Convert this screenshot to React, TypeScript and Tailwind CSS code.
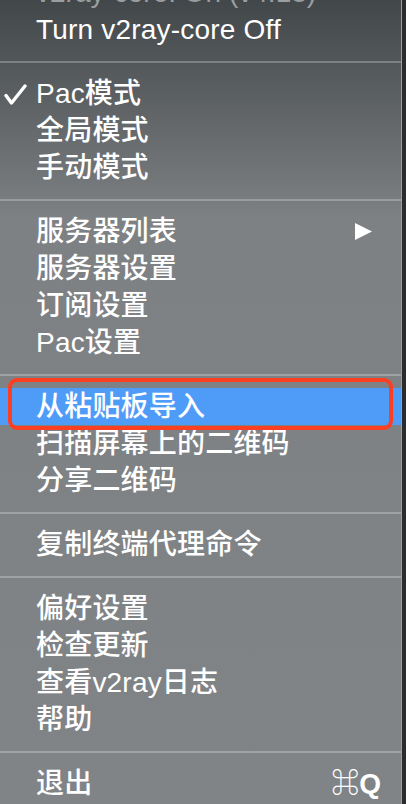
const font = { fontFamily: '"Liberation Sans", "Noto Sans CJK SC", sans-serif' };

function Row({ label, check, arrow, shortcut, active }: { label: string; check?: boolean; arrow?: boolean; shortcut?: string; active?: boolean }) {
  return (
    <div className={`relative flex items-center h-[37px] pl-[36px] pr-[24px] ${active ? "bg-[#4f9cf8]" : ""}`}>
      {check && (
        <svg className="absolute left-[4px] top-[9px]" width="24" height="22" viewBox="0 0 24 22">
          <path d="M2 11.5 L7.5 19 L21 2" fill="none" stroke="white" strokeWidth="3.4" strokeLinecap="round" strokeLinejoin="round" />
        </svg>
      )}
      <span className="text-[28px] leading-none font-medium text-white tracking-[0.2px]">{label}</span>
      {arrow && (
        <svg className="ml-auto mr-[5px]" width="17" height="17" viewBox="0 0 17 17">
          <path d="M0 0 L17 8.5 L0 17 Z" fill="white" />
        </svg>
      )}
      {shortcut && <span className="ml-auto mr-[-4px] text-[28px] leading-none font-bold text-white">{shortcut}</span>}
    </div>
  );
}

function Sep() {
  return (
    <div className="h-[27px] flex items-center">
      <div className="w-full h-[2px] bg-white/25" />
    </div>
  );
}

export default function App() {
  return (
    <div className="w-[406px] h-[804px] overflow-hidden flex bg-[#1f2122]" style={font}>
      <div className="relative w-[401px] h-full flex flex-col bg-linear-to-b from-[#42474a] via-[#7e8184] via-[27%] to-[#818487]">
        <div className="-mt-[26px] flex items-center h-[37px] pl-[36px]">
          <span className="text-[28px] leading-none text-[#9a9ea1]">v2ray-core: On  (v4.18)</span>
        </div>
        <Row label="Turn v2ray-core Off" />
        <Sep />
        <Row label="Pac模式" check />
        <Row label="全局模式" />
        <Row label="手动模式" />
        <Sep />
        <Row label="服务器列表" arrow />
        <Row label="服务器设置" />
        <Row label="订阅设置" />
        <Row label="Pac设置" />
        <Sep />
        <Row label="从粘贴板导入" active />
        <Row label="扫描屏幕上的二维码" />
        <Row label="分享二维码" />
        <Sep />
        <Row label="复制终端代理命令" />
        <Sep />
        <Row label="偏好设置" />
        <Row label="检查更新" />
        <Row label="查看v2ray日志" />
        <Row label="帮助" />
        <Sep />
        <Row label="退出" shortcut="⌘Q" />
        {/* annotation box around the highlighted row */}
        <div className="absolute left-[8px] top-[378px] w-[385px] h-[52px] rounded-[9px] border-[4px] border-[#fb3f22]" />
      </div>
      <div className="w-[1px] h-full bg-[#9c9fa1]" />
      <div className="flex-1 h-full bg-[#2a2c2d]" />
    </div>
  );
}
